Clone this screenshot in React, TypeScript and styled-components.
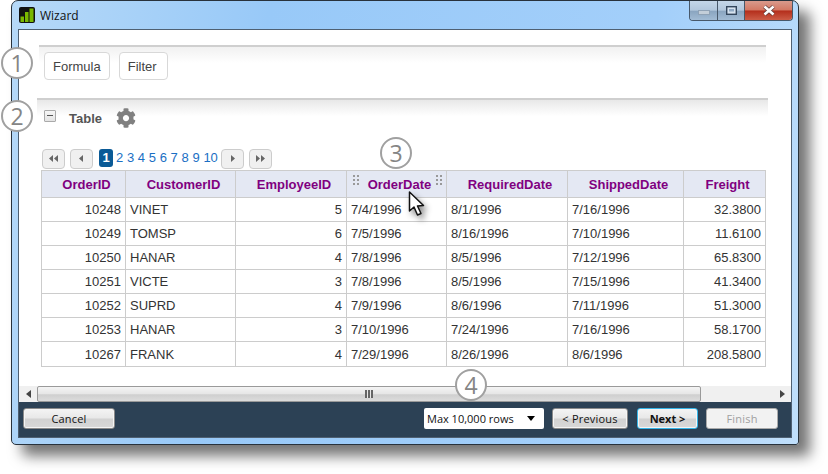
import * as React from 'react';
import styled, { createGlobalStyle } from 'styled-components';
import { FaCog } from 'react-icons/fa';

const columns = [
  { title: 'OrderID', width: 84 },
  { title: 'CustomerID', width: 110 },
  { title: 'EmployeeID', width: 111 },
  { title: 'OrderDate', width: 100 },
  { title: 'RequiredDate', width: 121 },
  { title: 'ShippedDate', width: 116 },
  { title: 'Freight', width: 82 },
];

const rows = [
  ['10248', 'VINET', '5', '7/4/1996', '8/1/1996', '7/16/1996', '32.3800'],
  ['10249', 'TOMSP', '6', '7/5/1996', '8/16/1996', '7/10/1996', '11.6100'],
  ['10250', 'HANAR', '4', '7/8/1996', '8/5/1996', '7/12/1996', '65.8300'],
  ['10251', 'VICTE', '3', '7/8/1996', '8/5/1996', '7/15/1996', '41.3400'],
  ['10252', 'SUPRD', '4', '7/9/1996', '8/6/1996', '7/11/1996', '51.3000'],
  ['10253', 'HANAR', '3', '7/10/1996', '7/24/1996', '7/16/1996', '58.1700'],
  ['10267', 'FRANK', '4', '7/29/1996', '8/26/1996', '8/6/1996', '208.5800'],
];

const numericCols = [0, 2, 6];

const PagerIcon = ({ kind }: { kind: 'first' | 'prev' | 'next' | 'last' }) => {
  const paths = {
    first: 'M6 1 L2 4.5 L6 8 Z M11 1 L7 4.5 L11 8 Z',
    prev: 'M8 1 L4 4.5 L8 8 Z',
    next: 'M5 1 L9 4.5 L5 8 Z',
    last: 'M2 1 L6 4.5 L2 8 Z M7 1 L11 4.5 L7 8 Z',
  };
  return (
    <svg width="13" height="9" viewBox="0 0 13 9">
      <path d={paths[kind]} fill="#666" />
    </svg>
  );
};

const Grip = () => (
  <svg width="7" height="10" viewBox="0 0 7 10">
    {[0, 4, 8].map((y) =>
      [0, 4].map((x) => <rect key={`${x}-${y}`} x={x} y={y} width="2" height="2" fill="#999" />),
    )}
  </svg>
);

export default function App() {
  return (
    <>
      <GlobalResetStyles />
      <Page>
        <Window>
          <TitleBar>
            <svg width="16" height="16" viewBox="0 0 16 16">
              <rect width="16" height="16" rx="2" fill="#111" />
              <rect x="1.5" y="9.5" width="3.5" height="5.5" fill="#7ab800" />
              <rect x="6" y="5" width="3.5" height="10" fill="#7ab800" />
              <rect x="10.5" y="1.5" width="4" height="13.5" fill="#7ab800" />
            </svg>
            <WindowTitle>Wizard</WindowTitle>
            <WindowControls>
              <MinButton>
                <svg width="12" height="5" viewBox="0 0 12 5">
                  <rect x="0.5" y="0.5" width="11" height="4" fill="#c3ced9" stroke="#8fa2b6" />
                </svg>
              </MinButton>
              <MaxButton>
                <svg width="11" height="9" viewBox="0 0 11 9">
                  <rect x="0.7" y="0.7" width="9.6" height="7.6" fill="#d6e2ee" stroke="#33465c" strokeWidth="1.4" />
                  <rect x="3" y="3" width="5" height="2.5" fill="#8fa9c4" />
                </svg>
              </MaxButton>
              <CloseButton>
                <svg width="14" height="11" viewBox="0 0 14 11">
                  <path d="M2.5 1.5 L11.5 9.5 M11.5 1.5 L2.5 9.5" stroke="#5a3a38" strokeWidth="4" />
                  <path d="M2.5 1.5 L11.5 9.5 M11.5 1.5 L2.5 9.5" stroke="#fff" strokeWidth="2.6" />
                </svg>
              </CloseButton>
            </WindowControls>
          </TitleBar>
          <Client>
            <Content>
              <FormulaSection>
                <ActionButton>Formula</ActionButton>
                <FilterButton>Filter</FilterButton>
              </FormulaSection>
              <TableSection>
                <CollapseBox />
                <TableLabel>Table</TableLabel>
                <FaCog size={20} color="#808080" />
              </TableSection>
              <Pager>
                <PagerButton><PagerIcon kind="first" /></PagerButton>
                <PagerButton><PagerIcon kind="prev" /></PagerButton>
                <PageNumbers>
                  <CurrentPage>1</CurrentPage>
                  {[2, 3, 4, 5, 6, 7, 8, 9, 10].map((n) => (
                    <PageLink key={n}>{n}</PageLink>
                  ))}
                </PageNumbers>
                <PagerButton><PagerIcon kind="next" /></PagerButton>
                <PagerButton><PagerIcon kind="last" /></PagerButton>
              </Pager>
              <DataTable>
                <colgroup>
                  {columns.map((c) => (
                    <col key={c.title} style={{ width: c.width }} />
                  ))}
                </colgroup>
                <thead>
                  <tr>
                    {columns.map((c) => (
                      <HeadCell key={c.title}>
                        {c.title === 'OrderDate' && <LeftGrip><Grip /></LeftGrip>}
                        {c.title}
                        {c.title === 'OrderDate' && <RightGrip><Grip /></RightGrip>}
                      </HeadCell>
                    ))}
                  </tr>
                </thead>
                <tbody>
                  {rows.map((row) => (
                    <tr key={row[0]}>
                      {row.map((value, i) => (
                        <BodyCell key={i} $numeric={numericCols.includes(i)}>
                          {value}
                        </BodyCell>
                      ))}
                    </tr>
                  ))}
                </tbody>
              </DataTable>
              <Cursor width="20" height="28" viewBox="0 0 20 28">
                <path
                  d="M1.5 1 L1.5 20 L6 16 L9.5 24 L13 22.5 L9.5 15 L15.5 14.5 Z"
                  fill="#fff"
                  stroke="#111"
                  strokeWidth="1.5"
                  strokeLinejoin="round"
                />
              </Cursor>
              <Callout $left={-18} $top={17}>1</Callout>
              <Callout $left={-18} $top={70}>2</Callout>
              <Callout $left={361} $top={107}>3</Callout>
              <Callout $left={436} $top={339}>4</Callout>
            </Content>
            <ScrollBar>
              <ScrollArrow>
                <svg width="5" height="8" viewBox="0 0 5 8"><path d="M5 0 L0 4 L5 8 Z" fill="#444" /></svg>
              </ScrollArrow>
              <ScrollThumb>
                <ThumbGrip />
              </ScrollThumb>
              <ScrollTrack />
              <ScrollArrow>
                <svg width="5" height="8" viewBox="0 0 5 8"><path d="M0 0 L5 4 L0 8 Z" fill="#444" /></svg>
              </ScrollArrow>
            </ScrollBar>
            <Footer>
              <CancelButton>Cancel</CancelButton>
              <FooterRight>
                <RowsSelect>
                  Max 10,000 rows
                  <svg width="8" height="5" viewBox="0 0 8 5"><path d="M0 0 L8 0 L4 5 Z" fill="#000" /></svg>
                </RowsSelect>
                <PreviousButton>&lt; Previous</PreviousButton>
                <NextButton>Next &gt;</NextButton>
                <FinishButton>Finish</FinishButton>
              </FooterRight>
            </Footer>
          </Client>
        </Window>
      </Page>
    </>
  );
}

const GlobalResetStyles = createGlobalStyle`
  * {
    margin: 0;
    padding: 0;
    box-sizing: border-box;
  }
  html, body {
    width: 828px;
    height: 474px;
    overflow: hidden;
    background: #fff;
    font-family: "Liberation Sans", Arial, sans-serif;
  }
`;

const Page = styled.div`
  padding-left: 11px;
`;

const Window = styled.div`
  width: 788px;
  height: 445px;
  display: flex;
  flex-direction: column;
  padding: 0 6px 6px;
  border: 1px solid #28323c;
  border-radius: 7px 7px 3px 5px;
  background: linear-gradient(100deg, #b6d9f8 0%, #98c9f8 30%, #a3cffa 75%, #c0dffb 100%);
  box-shadow: 11px 11px 14px rgba(0, 0, 0, 0.55);
`;

const TitleBar = styled.div`
  height: 28px;
  flex: none;
  display: flex;
  align-items: center;
  gap: 5px;
  padding-left: 1px;
  position: relative;
`;

const WindowTitle = styled.span`
  font: 12px "Open Sans", sans-serif;
  color: #111;
`;

const WindowControls = styled.div`
  position: absolute;
  top: 0;
  right: -1px;
  display: flex;
  height: 20px;
  border: 1px solid #47586a;
  border-top: none;
  border-radius: 0 0 4px 4px;
  overflow: hidden;
`;

const ControlButton = styled.div`
  display: flex;
  align-items: center;
  justify-content: center;
  background: linear-gradient(#c4d6e8 0%, #b2c7dc 48%, #8aa5c0 54%, #a2bbd4 100%);
`;

const MinButton = styled(ControlButton)`
  width: 28px;
  padding-top: 4px;
  border-right: 1px solid #47586a;
`;

const MaxButton = styled(ControlButton)`
  width: 27px;
  border-right: 1px solid #47586a;
`;

const CloseButton = styled(ControlButton)`
  width: 47px;
  background: linear-gradient(#d99a8c 0%, #d47a66 45%, #b5301e 54%, #cc5c46 100%);
`;

const Client = styled.div`
  flex: 1;
  display: flex;
  flex-direction: column;
  background: #fff;
  border: 1px solid #4f6072;
  min-height: 0;
`;

const Content = styled.div`
  flex: 1;
  position: relative;
  padding-top: 15px;
  min-height: 0;
`;

const FormulaSection = styled.div`
  width: 727px;
  height: 53px;
  margin-left: 20px;
  display: flex;
  align-items: flex-start;
  gap: 9px;
  padding: 5px 0 0 5px;
  border-top: 2px solid #cfcfcf;
  background: linear-gradient(#f1f1f1, #fff 16px);
`;

const ActionButton = styled.button`
  height: 28px;
  padding: 0 8px;
  font: 13px "Liberation Sans", Arial, sans-serif;
  color: #444;
  background: #fff;
  border: 1px solid #d8d8d8;
  border-radius: 4px;
`;

const FilterButton = styled(ActionButton)`
  padding-right: 10px;
`;

const TableSection = styled.div`
  width: 731px;
  height: 50px;
  margin-left: 18px;
  display: flex;
  align-items: flex-start;
  padding: 8px 0 0 7px;
  border-top: 2px solid #cfcfcf;
  background: linear-gradient(#e8e8e8, #fff 16px);
`;

const CollapseBox = styled.div`
  width: 12px;
  height: 12px;
  margin-top: 2px;
  border: 1px solid #aaa;
  border-radius: 1px;
  background: linear-gradient(#f6f6f6, #e4e4e4);
  position: relative;
  &::after {
    content: '';
    position: absolute;
    left: 2px;
    right: 2px;
    top: 4px;
    height: 1px;
    background: #555;
  }
`;

const TableLabel = styled.span`
  font: bold 13px "Liberation Sans", Arial, sans-serif;
  color: #555;
  margin: 3px 14px 0 13px;
  line-height: 16px;
`;

const Pager = styled.div`
  height: 21px;
  display: flex;
  align-items: center;
  margin-left: 23px;
`;

const PagerButton = styled.div`
  width: 23px;
  height: 20px;
  margin-right: 5px;
  display: flex;
  align-items: center;
  justify-content: center;
  background: #f0f0f0;
  border: 1px solid #ccc;
  border-radius: 4px;
`;

const PageNumbers = styled.div`
  display: flex;
  align-items: center;
  margin: 0 0 2px 1px;
  font-size: 13px;
`;

const CurrentPage = styled.span`
  width: 14px;
  height: 18px;
  margin-right: 3px;
  display: flex;
  align-items: center;
  justify-content: center;
  background: #0a5a96;
  color: #fff;
  font-weight: bold;
  border-radius: 3px;
`;

const PageLink = styled.span`
  color: #1a6fc4;
  margin-right: 3.7px;
  &:last-child {
    margin-right: 3px;
  }
`;

const DataTable = styled.table`
  table-layout: fixed;
  width: 724px;
  margin: 1px 0 0 22px;
  border-collapse: collapse;
  font: 13px "Liberation Sans", Arial, sans-serif;
`;

const HeadCell = styled.th`
  height: 27px;
  position: relative;
  padding: 0 0 0 6px;
  background: #e4e8f3;
  color: #800080;
  font-weight: bold;
  text-align: center;
  border: 1px solid #cccccc;
`;

const LeftGrip = styled.span`
  position: absolute;
  left: 6px;
  top: 4px;
  display: flex;
`;

const RightGrip = styled.span`
  position: absolute;
  right: 3px;
  top: 4px;
  display: flex;
`;

const BodyCell = styled.td<{ $numeric: boolean }>`
  height: 24px;
  padding: 0 4px;
  color: #333;
  text-align: ${(p) => (p.$numeric ? 'right' : 'left')};
  border: 1px solid #cccccc;
  tr:last-child > & {
    height: 25px;
  }
`;

const Cursor = styled.svg`
  position: absolute;
  left: 389px;
  top: 161px;
  filter: drop-shadow(3px 4px 3px rgba(0, 0, 0, 0.45));
`;

const Callout = styled.div<{ $left: number; $top: number }>`
  position: absolute;
  left: ${(p) => p.$left}px;
  top: ${(p) => p.$top}px;
  width: 32px;
  height: 32px;
  display: flex;
  align-items: center;
  justify-content: center;
  background: #fff;
  border: 2px solid #a0a0a0;
  border-radius: 50%;
  font: 400 23px "Open Sans", sans-serif;
  color: #858585;
`;

const ScrollBar = styled.div`
  height: 16px;
  flex: none;
  display: flex;
  align-items: stretch;
  background: #f0f0f0;
`;

const ScrollArrow = styled.div`
  width: 18px;
  flex: none;
  display: flex;
  align-items: center;
  justify-content: center;
`;

const ScrollThumb = styled.div`
  width: 664px;
  flex: none;
  display: flex;
  align-items: center;
  justify-content: center;
  border: 1px solid #9a9a9a;
  border-radius: 2px;
  background: linear-gradient(#f4f4f4, #e6e6e6 50%, #cfcfcf 55%, #dcdcdc);
`;

const ThumbGrip = styled.div`
  width: 8px;
  height: 8px;
  background: repeating-linear-gradient(90deg, #666 0 2px, #e8e8e8 2px 3px);
`;

const ScrollTrack = styled.div`
  flex: 1;
`;

const Footer = styled.div`
  height: 35px;
  flex: none;
  display: flex;
  align-items: center;
  justify-content: space-between;
  padding: 0 13px 2px 4px;
  background: #2c4155;
`;

const FooterRight = styled.div`
  display: flex;
  align-items: center;
`;

const DialogButton = styled.div`
  height: 21px;
  display: flex;
  align-items: center;
  justify-content: center;
  font: 11px "Open Sans", sans-serif;
  letter-spacing: 0.2px;
  color: #111;
  border: 1px solid #8a8a8a;
  border-radius: 3px;
  box-shadow: inset 0 0 0 1px #f4f4f4;
  background: linear-gradient(#f4f4f4, #e8e8e8 48%, #d2d2d2 52%, #d8d8d8);
`;

const CancelButton = styled(DialogButton)`
  width: 92px;
`;

const RowsSelect = styled.div`
  width: 120px;
  height: 21px;
  margin-right: 8px;
  padding: 0 9px 0 3px;
  display: flex;
  align-items: center;
  justify-content: space-between;
  background: #fff;
  border-radius: 2px;
  font: 11px "Open Sans", sans-serif;
  color: #111;
`;

const PreviousButton = styled(DialogButton)`
  width: 76px;
  margin-right: 9px;
`;

const NextButton = styled(DialogButton)`
  width: 61px;
  margin-right: 8px;
  border-color: #35b5e8;
  font-weight: bold;
  letter-spacing: 0;
`;

const FinishButton = styled(DialogButton)`
  width: 72px;
  color: #a0a0a0;
  background: #f2f2f2;
  border-color: #aaa;
`;
